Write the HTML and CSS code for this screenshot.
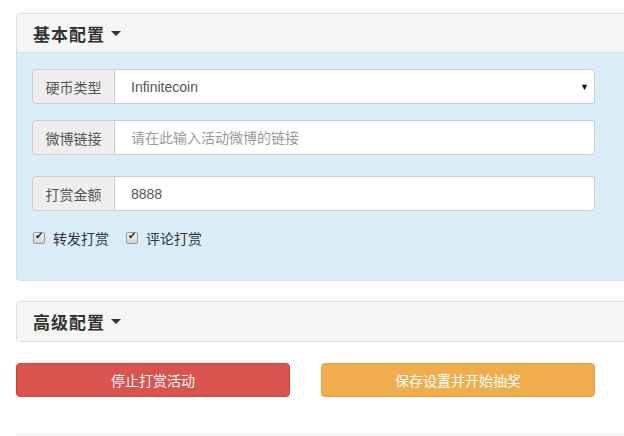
FILE: index.html
```html
<!DOCTYPE html>
<html lang="zh-CN">
<head>
    <meta charset="UTF-8">
    <title>打赏设置</title>
    <link rel="stylesheet" href="styles.css">
</head>
<body>
    <div class="page">
        <div class="panel panel-info">
            <div class="panel-heading">基本配置 <span class="caret"></span></div>
            <div class="panel-body">
                <div class="input-group">
                    <span class="addon">硬币类型</span>
                    <div class="select-box">
                        <span>Infinitecoin</span>
                        <span class="arrow">▼</span>
                    </div>
                </div>
                <div class="input-group">
                    <span class="addon">微博链接</span>
                    <input type="text" placeholder="请在此输入活动微博的链接">
                </div>
                <div class="input-group gap-lg">
                    <span class="addon">打赏金额</span>
                    <input type="text" value="8888">
                </div>
                <div class="checks">
                    <label><input type="checkbox" checked> 转发打赏</label>
                    <label><input type="checkbox" checked> 评论打赏</label>
                </div>
            </div>
        </div>

        <div class="panel panel-last">
            <div class="panel-heading">高级配置 <span class="caret"></span></div>
        </div>

        <div class="actions">
            <button class="btn btn-danger">停止打赏活动</button>
            <button class="btn btn-warning">保存设置并开始抽奖</button>
        </div>

        <hr>
    </div>
</body>
</html>
```

FILE: styles.css
```css
* {
    margin: 0;
    padding: 0;
    box-sizing: border-box;
}

html, body {
    overflow: hidden;
}

body {
    font-family: "Liberation Sans", "Noto Sans CJK SC", sans-serif;
    font-size: 14px;
    color: #333;
    background: #fff;
}

.page {
    padding: 13px 0 0 16px;
    width: 660px;
}

.panel {
    border: 1px solid #ddd;
    border-right: none;
    border-radius: 4px 0 0 4px;
    margin-bottom: 20px;
    background: #fff;
}

.panel-last {
    margin-bottom: 21px;
}

.panel-heading {
    height: 39px;
    padding: 0 16px;
    display: flex;
    align-items: center;
    background: #f5f5f5;
    font-family: "Noto Sans CJK SC", sans-serif;
    font-size: 17px;
    font-weight: 700;
    letter-spacing: 1px;
    color: #333;
}

.panel-info .panel-heading {
    border-bottom: 1px solid #ddd;
}

.caret {
    display: inline-block;
    margin-left: 6px;
    border-top: 5px solid #333;
    border-left: 5px solid transparent;
    border-right: 5px solid transparent;
}

.panel-body {
    background: #d9edf7;
    padding: 16px 15px 33px;
    height: 227px;
}

.input-group {
    display: flex;
    width: 563px;
    height: 35px;
    margin-bottom: 16px;
}

.input-group.gap-lg {
    margin-top: 21px;
    margin-bottom: 0;
}

.addon {
    width: 83px;
    display: flex;
    align-items: center;
    justify-content: center;
    background: #eee;
    border: 1px solid #ccc;
    border-radius: 4px 0 0 4px;
    color: #555;
    font-family: "Noto Sans CJK SC", sans-serif;
    font-size: 14px;
}

.input-group input,
.select-box {
    flex: 1;
    border: 1px solid #ccc;
    border-left: none;
    border-radius: 0 4px 4px 0;
    background: #fff;
    padding: 0 16px;
    font-family: "Liberation Sans", "Noto Sans CJK SC", sans-serif;
    font-size: 14px;
    color: #555;
    outline: none;
}

.input-group input::placeholder {
    color: #999;
}

.select-box {
    display: flex;
    align-items: center;
    justify-content: space-between;
    padding-right: 5px;
}

.select-box .arrow {
    font-size: 9px;
    color: #111;
}

.checks {
    display: flex;
    gap: 16px;
    margin-top: 17px;
    font-family: "Noto Sans CJK SC", sans-serif;
    color: #333;
}

.checks label {
    display: flex;
    align-items: center;
    gap: 8px;
}

.checks input {
    appearance: none;
    width: 12px;
    height: 12px;
    margin-left: 1px;
    border: 1px solid #999;
    border-radius: 2px;
    background: linear-gradient(#f4f4f4, #d4d4d4);
    position: relative;
}

.checks input:checked::after {
    content: "✔";
    position: absolute;
    left: 1px;
    top: -3px;
    font-size: 10px;
    color: #222;
}

.actions {
    display: flex;
    gap: 31px;
    width: 579px;
}

.btn {
    flex: 1;
    height: 34px;
    border: 1px solid transparent;
    border-radius: 4px;
    color: #fff;
    font-family: "Noto Sans CJK SC", sans-serif;
    font-size: 14px;
}

.btn-danger {
    background: #d9534f;
    border-color: #d43f3a;
}

.btn-warning {
    background: #f0ad4e;
    border-color: #eea236;
}

hr {
    border: none;
    border-top: 1px solid #eee;
    margin-top: 37px;
}
```
